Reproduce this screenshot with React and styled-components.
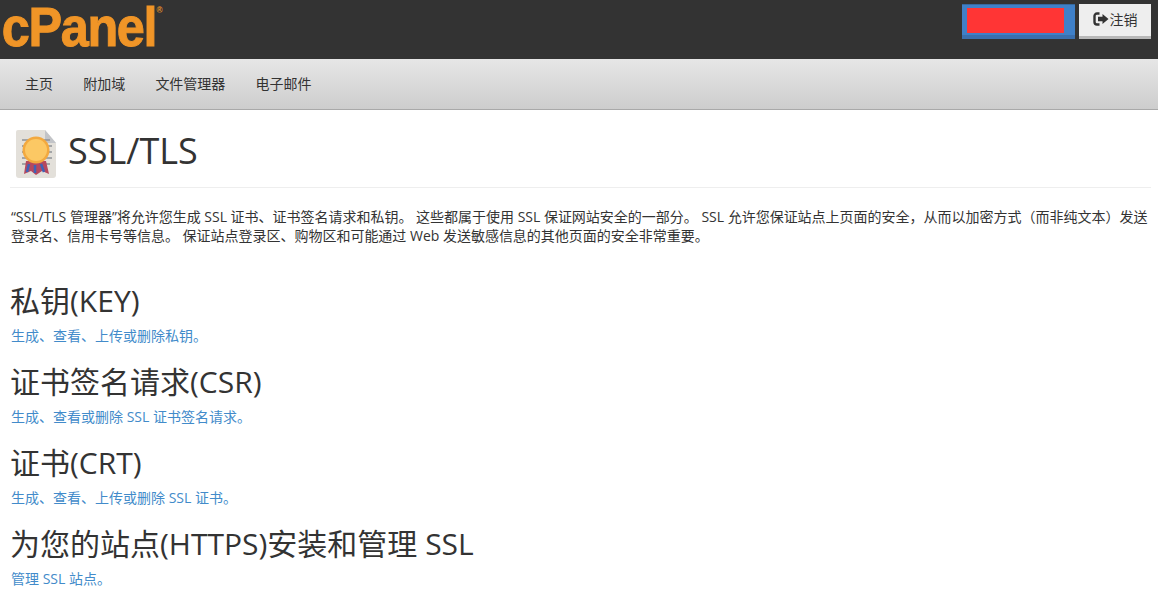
import React from "react";
import styled, { createGlobalStyle } from "styled-components";

const GlobalStyle = createGlobalStyle`
  html, body {
    margin: 0;
    padding: 0;
    background: #fff;
    overflow: hidden;
  }
  body {
    font-family: "Open Sans", "Noto Sans CJK SC", sans-serif;
    font-size: 14px;
    color: #333;
  }
`;

const TopBar = styled.header`
  height: 59px;
  background: #333;
  display: flex;
  justify-content: space-between;
  align-items: flex-start;
`;

const Logo = styled.div`
  font-family: "Liberation Sans", sans-serif;
  font-weight: 700;
  font-size: 56px;
  line-height: 54px;
  letter-spacing: -1.5px;
  color: #f09527;
  -webkit-text-stroke: 1px #f09527;
  padding-left: 2px;
  position: relative;
  transform: scaleX(0.9);
  transform-origin: left top;
  sup {
    position: absolute;
    top: 6px;
    right: -7px;
    font-size: 9px;
    line-height: 9px;
    letter-spacing: 0;
    -webkit-text-stroke: 0;
  }
`;

const UserArea = styled.div`
  display: flex;
  gap: 4px;
  padding: 4px 7px 0 0;
`;

const UserBox = styled.div`
  width: 113px;
  height: 35px;
  box-sizing: border-box;
  padding: 3px 11px 0 5px;
  background: #3f80c8;
  border-top: 1px solid #36699f;
  border-bottom: 4px solid #3a6fae;
  div {
    height: 25px;
    background: #ff3535;
  }
`;

const LogoutButton = styled.button`
  width: 72px;
  height: 35px;
  padding: 0 0 2px;
  border: 0;
  border-bottom: 3px solid #b8b8b8;
  background: #eee;
  color: #333;
  font: inherit;
  font-size: 14px;
  display: flex;
  align-items: center;
  justify-content: center;
  gap: 1px;
  svg {
    width: 16px;
    height: 14px;
  }
`;

const NavBar = styled.nav`
  height: 51px;
  box-sizing: border-box;
  background: linear-gradient(#e6e6e6, #cdcdcd);
  border-bottom: 1px solid #a9a9a9;
  display: flex;
  align-items: center;
  padding: 0 0 2px 25px;
  gap: 30.2px;
`;

const NavLink = styled.a`
  color: #333;
  font-size: 14px;
  text-decoration: none;
`;

const Page = styled.main`
  padding: 0 7px 0 10px;
`;

const TitleRow = styled.div`
  height: 78px;
  box-sizing: border-box;
  display: flex;
  align-items: flex-start;
  gap: 12px;
  padding: 20px 0 0 6px;
  border-bottom: 1px solid #eee;
`;

const Title = styled.h1`
  margin: 0;
  font-size: 36px;
  font-weight: 400;
  line-height: 42px;
`;

const Intro = styled.p`
  margin: 19px 0 34px;
  padding-left: 1px;
  font-size: 14px;
  line-height: 19px;
  letter-spacing: -0.01px;
`;

const Bracket = styled.span`
  font-family: "Noto Sans CJK TC", sans-serif;
`;

const Section = styled.section`
  margin-bottom: 13px;
`;

const SectionTitle = styled.h2`
  margin: 0;
  font-size: 30px;
  font-weight: 400;
  line-height: 43px;
`;

const SectionLink = styled.a`
  display: block;
  margin-top: 2px;
  padding-left: 1px;
  font-size: 14px;
  line-height: 23px;
  color: #428bca;
  text-decoration: none;
`;

function CertificateIcon() {
  return (
    <svg width="40" height="48" viewBox="0 0 40 48">
      <path d="M2 0H29L40 13V45a3 3 0 0 1-3 3H3a3 3 0 0 1-3-3V2a2 2 0 0 1 2-2z" fill="#e3e0da" />
      <path d="M29 0L40 13H31a2 2 0 0 1-2-2z" fill="#c2c4c8" />
      <path d="M6 10H34M6 16H36M6 22H36M6 28H36M6 34H34" stroke="#8f9196" strokeWidth="1.5" />
      <path d="M10 31L8 44L15 41L20 45L26 41L33 44L30 31z" fill="#b5485f" />
      <path d="M13 34L11 42M19 35V43M25 34L28 42" stroke="#3f62b5" strokeWidth="2.5" />
      <circle cx="20" cy="20" r="13.5" fill="#f3a93f" />
      <circle cx="20" cy="20" r="11" fill="#fcc864" />
    </svg>
  );
}

const sections = [
  { title: "私钥(KEY)", link: "生成、查看、上传或删除私钥。" },
  { title: "证书签名请求(CSR)", link: "生成、查看或删除 SSL 证书签名请求。" },
  { title: "证书(CRT)", link: "生成、查看、上传或删除 SSL 证书。" },
  { title: "为您的站点(HTTPS)安装和管理 SSL", link: "管理 SSL 站点。" },
];

const navItems = ["主页", "附加域", "文件管理器", "电子邮件"];

export default function App() {
  return (
    <>
      <GlobalStyle />
      <TopBar>
        <Logo>
          cPanel<sup>®</sup>
        </Logo>
        <UserArea>
          <UserBox>
            <div />
          </UserBox>
          <LogoutButton>
            <svg viewBox="0 0 16 14">
              <path d="M6.5 1.5H4A2.5 2.5 0 0 0 1.5 4V10A2.5 2.5 0 0 0 4 12.5H6.5" fill="none" stroke="#333" strokeWidth="2.4" />
              <path d="M5 4.8H9.5V2L15.5 7L9.5 12V9.2H5z" fill="#333" />
            </svg>
            注销
          </LogoutButton>
        </UserArea>
      </TopBar>
      <NavBar>
        {navItems.map((item) => (
          <NavLink href="#" key={item}>
            {item}
          </NavLink>
        ))}
      </NavBar>
      <Page>
        <TitleRow>
          <CertificateIcon />
          <Title>SSL/TLS</Title>
        </TitleRow>
        <Intro>
          “SSL/TLS 管理器”将允许您生成 SSL 证书、证书签名请求和私钥。 这些都属于使用 SSL 保证网站安全的一部分。 SSL 允许您保证站点上页面的安全，从而以加密方式<Bracket>（</Bracket>而非纯文本<Bracket>）</Bracket>发送
          <br />
          登录名、信用卡号等信息。 保证站点登录区、购物区和可能通过 Web 发送敏感信息的其他页面的安全非常重要。
        </Intro>
        {sections.map((section) => (
          <Section key={section.title}>
            <SectionTitle>{section.title}</SectionTitle>
            <SectionLink href="#">{section.link}</SectionLink>
          </Section>
        ))}
      </Page>
    </>
  );
}
